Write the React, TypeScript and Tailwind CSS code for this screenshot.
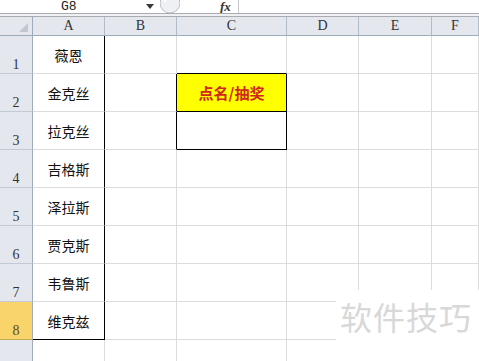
import React from 'react';

const COLS = ['A', 'B', 'C', 'D', 'E', 'F'];
const WIDTHS = [72, 72, 110, 72, 73, 47];
const NAMES = ['薇恩', '金克丝', '拉克丝', '吉格斯', '泽拉斯', '贾克斯', '韦鲁斯', '维克兹'];

const cjk = { fontFamily: '"SimSun", "Noto Sans CJK SC", sans-serif' };

function Cell({ r, c }: { r: number; c: number }) {
    const inTable = r >= 1 && r <= 8;
    // black borders: names column, and the C2:C3 box
    const rightBlack = (c === 0 && inTable) || ((c === 1 || c === 2) && (r === 2 || r === 3));
    const bottomBlack = (c === 0 && r === 8) || (c === 2 && r >= 1 && r <= 3);
    const yellow = c === 2 && r === 2;

    return (
        <div
            className={`flex items-center justify-center border-r border-b text-[14px] ${
                rightBlack ? 'border-r-black' : 'border-r-[#dadcdd]'
            } ${bottomBlack ? 'border-b-black' : 'border-b-[#dadcdd]'} ${yellow ? 'bg-[#ffff00]' : 'bg-white'}`}
            style={cjk}
        >
            {c === 0 && inTable && <span className="pt-[2px] text-[#111]">{NAMES[r - 1]}</span>}
            {yellow && <span className="pt-[2px] text-[15px] font-bold text-[#d0261c]">点名/抽奖</span>}
        </div>
    );
}

export default function App() {
    const rows = [1, 2, 3, 4, 5, 6, 7, 8, 9];

    return (
        <div className="relative w-[479px] h-[361px] overflow-hidden bg-white" style={{ fontFamily: '"Liberation Serif", serif' }}>
            {/* formula bar */}
            <div className="flex h-[14px] border-b border-[#a8abb0] bg-white">
                <div className="flex w-[160px] items-center">
                    <span className="ml-[61px] text-[13px] leading-[13px] text-[#222]" style={{ fontFamily: '"Liberation Mono", monospace' }}>G8</span>
                    <svg className="ml-[69px]" width="8" height="5" viewBox="0 0 8 5">
                        <path d="M0 0h8L4 5z" fill="#3a3a3a" />
                    </svg>
                </div>
                <div className="relative w-[78px] overflow-hidden">
                    <svg className="absolute left-0 top-[-8px]" width="20" height="22" viewBox="0 0 20 22">
                        <circle cx="10" cy="11" r="10" fill="#eef0f3" stroke="#b9bdc3" />
                        <path d="M5 10a6 6 0 0 1 9-5" stroke="#ffffff" strokeWidth="2" fill="none" />
                    </svg>
                    <span className="absolute left-[60px] top-0 text-[13px] font-bold italic leading-[13px] text-[#333]">fx</span>
                </div>
                <div className="flex-1 border-l border-[#c5c8cc]" />
            </div>
            <div className="h-[3px] border-b border-[#a8abb0] bg-[#eef0f2]" />

            {/* sheet grid */}
            <div
                className="grid"
                style={{
                    gridTemplateColumns: `33px ${WIDTHS.map((w) => `${w}px`).join(' ')}`,
                    gridTemplateRows: `19px repeat(8, 38px) 40px`,
                }}
            >
                <div className="relative border-r border-b border-[#9eabbb] bg-[#e4e8ee]">
                    <svg className="absolute right-[4px] bottom-[3px]" width="9" height="9" viewBox="0 0 9 9">
                        <path d="M9 0v9H0z" fill="#c2c7cf" />
                    </svg>
                </div>
                {COLS.map((c) => (
                    <div
                        key={c}
                        className="flex items-center justify-center border-r border-b border-r-[#b1bccb] border-b-[#9eabbb] bg-[#e4e8ee] text-[14px] leading-none text-[#333]"
                    >
                        {c}
                    </div>
                ))}
                {rows.map((r) => (
                    <React.Fragment key={r}>
                        <div
                            className={`flex items-end justify-center border-r border-b border-r-[#9eabbb] pb-[1px] text-[14px] leading-none ${
                                r === 8 ? 'bg-[#f9d46a] border-b-[#c7aa57] text-[#5a4a1a]' : 'bg-[#e4e8ee] border-b-[#c3cad6] text-[#333]'
                            }`}
                        >
                            {r <= 8 ? r : ''}
                        </div>
                        {COLS.map((_, c) => (
                            <Cell key={c} r={r} c={c} />
                        ))}
                    </React.Fragment>
                ))}
            </div>

            {/* watermark */}
            <div className="absolute left-[336px] top-[290px] flex h-[71px] w-[143px] items-start bg-white pl-[4px] pt-[6px]">
                <span className="text-[32px] leading-[40px] tracking-[1px] text-[#d8d8d8]" style={{ fontFamily: '"Noto Sans CJK SC", sans-serif' }}>
                    软件技巧
                </span>
            </div>
        </div>
    );
}
